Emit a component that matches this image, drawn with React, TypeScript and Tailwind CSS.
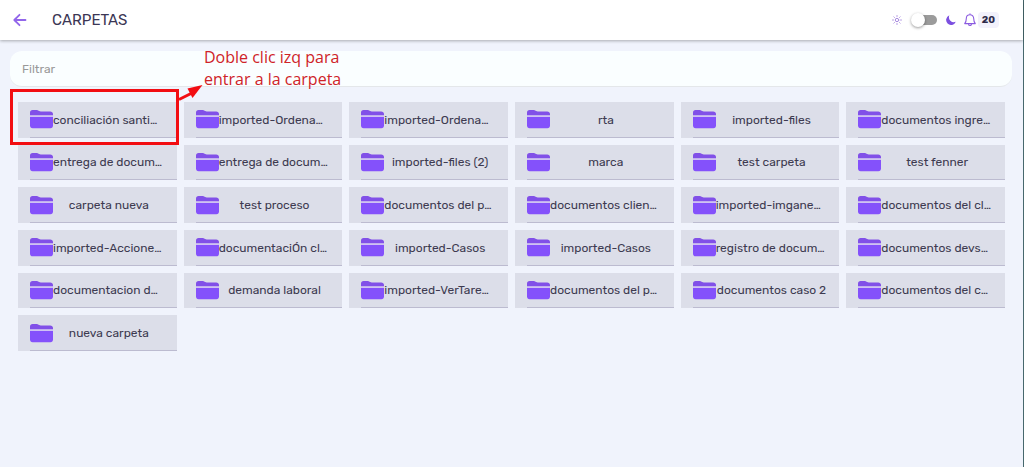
const folders = [
  "conciliación santi…",
  "imported-Ordena…",
  "imported-Ordena…",
  "rta",
  "imported-files",
  "documentos ingre…",
  "entrega de docum…",
  "entrega de docum…",
  "imported-files (2)",
  "marca",
  "test carpeta",
  "test fenner",
  "carpeta nueva",
  "test proceso",
  "documentos del p…",
  "documentos clien…",
  "imported-imgane…",
  "documentos del cl…",
  "imported-Accione…",
  "documentaciÓn cl…",
  "imported-Casos",
  "imported-Casos",
  "registro de docum…",
  "documentos devs…",
  "documentacion d…",
  "demanda laboral",
  "imported-VerTare…",
  "documentos del p…",
  "documentos caso 2",
  "documentos del c…",
  "nueva carpeta",
]

function BackIcon() {
  return (
    <svg width="14" height="14" viewBox="0 0 14 14" fill="none" stroke="#9266ea" strokeWidth="1.8" strokeLinecap="round" strokeLinejoin="round">
      <path d="M12.5 7H1.5M6.5 1.8L1.3 7l5.2 5.2" />
    </svg>
  )
}

function SunIcon() {
  return (
    <svg width="10" height="10" viewBox="0 0 10 10" fill="none" stroke="#a98be0" strokeWidth="1" strokeLinecap="round">
      <circle cx="5" cy="5" r="1.7" />
      <path d="M5 .6v.8M5 8.6v.8M.6 5h.8M8.6 5h.8M1.9 1.9l.5.5M7.6 7.6l.5.5M1.9 8.1l.5-.5M7.6 2.4l.5-.5" />
    </svg>
  )
}

function MoonIcon() {
  return (
    <svg width="10" height="10" viewBox="0 0 10 10" fill="#7c4fe0">
      <path d="M3.4.3A5 5 0 1 0 9.8 6.8 4.9 4.9 0 0 1 3.4.3z" />
    </svg>
  )
}

function BellIcon() {
  return (
    <svg width="12" height="14" viewBox="0 0 12 14" fill="none" stroke="#8b5be0" strokeWidth="1.1" strokeLinecap="round" strokeLinejoin="round">
      <path d="M6 .8v1M6 1.8c-2.300 0-3.700 1.700-3.700 3.800 0 3-.7 4-1.600 5h10.600c-.9-1-1.600-2-1.600-5C9.700 3.500 8.300 1.800 6 1.800z" />
      <path d="M4.600 11.200c0 1.800 2.800 1.800 2.800 0" />
    </svg>
  )
}

function FolderIcon() {
  return (
    <svg className="shrink-0" width="23" height="19" viewBox="0 0 23 19">
      <path d="M0 5.500V2.500C0 1 1 0 2.500 0h4.200c.8 0 1.300.2 1.900.7l.6.400c.5.300.9.400 1.500.400h9.500c1.600 0 2.800.9 2.800 2.500v1.500z" fill="#8150e8" />
      <path d="M0 6.700h23v8.900c0 1.600-1 2.700-2.600 2.700H2.600C1 18.300 0 17.200 0 15.600z" fill="#8451fb" />
      <path d="M0 5.500h23v1.200H0z" fill="#d3c6f5" />
    </svg>
  )
}

function Folder({ name }: { name: string }) {
  const clipped = name.endsWith("…")
  return (
    <button type="button" className="relative flex items-center bg-[#dcdee9] px-3 text-[#3d3a50]">
      <FolderIcon />
      <span className={`min-w-0 flex-1 whitespace-nowrap text-xs leading-5 ${clipped ? "text-left" : "text-center"}`}>
        {name}
      </span>
      <span className="absolute right-0 bottom-0 left-3 h-px bg-[#bcbbd0]" />
    </button>
  )
}

export default function App() {
  return (
    <div className="min-h-screen border-r border-[#47686d] bg-[#f0f3fc] font-['Rubik','Roboto',sans-serif]">
      <header className="flex h-10 items-center bg-white pr-6 pl-3 shadow-[0_1px_3px_rgba(0,0,0,0.3)]">
        <button type="button" aria-label="Volver" className="mr-6 px-px">
          <BackIcon />
        </button>
        <h1 className="text-[15px] leading-5 text-[#3b3654]">CARPETAS</h1>
        <div className="ml-auto flex items-center gap-2">
          <SunIcon />
          <label className="relative mx-px flex h-4 w-[26px] items-center">
            <input type="checkbox" aria-label="Modo oscuro" className="peer absolute inset-0 opacity-0" />
            <span className="ml-auto h-[10px] w-5 rounded-full bg-[#9b9b9b]" />
            <span className="absolute left-0 size-[14px] rounded-full bg-white shadow-[0_1px_3px_rgba(0,0,0,0.4)] peer-checked:left-3" />
          </label>
          <MoonIcon />
          <button type="button" aria-label="Notificaciones" className="flex items-center gap-0.5">
            <BellIcon />
            <span className="rounded bg-[#f2f1fb] px-1 text-[10px] leading-4 font-bold text-[#2f2b4a]">20</span>
          </button>
        </div>
      </header>

      <main className="pt-[11px] pr-[11px] pl-[10px]">
        <input
          type="text"
          aria-label="Filtrar"
          placeholder="Filtrar"
          className="block h-9 w-full rounded-xl border-b border-[#e4e7ea] bg-[#fafeff] px-3 text-xs text-[#3d3a50] placeholder:text-[#999999]"
        />
        <div className="relative mt-[15px] grid h-[249px] grid-cols-6 grid-rows-6 gap-[7px] pr-[7px] pl-2">
          {folders.map((name, i) => (
            <Folder key={i} name={name} />
          ))}

          {/* Help overlay */}
          <div className="pointer-events-none absolute -top-[13px] left-0 h-14 w-[169px] border-3 border-[#f20d12]" />
          <svg className="pointer-events-none absolute -top-[17px] left-[168px]" width="26" height="16" viewBox="0 0 26 16">
            <path d="M1 14.500L14 8" stroke="#f20d12" strokeWidth="3" />
            <path d="M24.500 0L9.500 3.500l5 9.500z" fill="#f20d12" />
          </svg>
          <p className="pointer-events-none absolute -top-[56px] left-[194px] font-['Open_Sans',sans-serif] text-base leading-[22px] whitespace-nowrap text-[#cf2328]">
            Doble clic izq para
            <br />
            entrar a la carpeta
          </p>
        </div>
      </main>
    </div>
  )
}
